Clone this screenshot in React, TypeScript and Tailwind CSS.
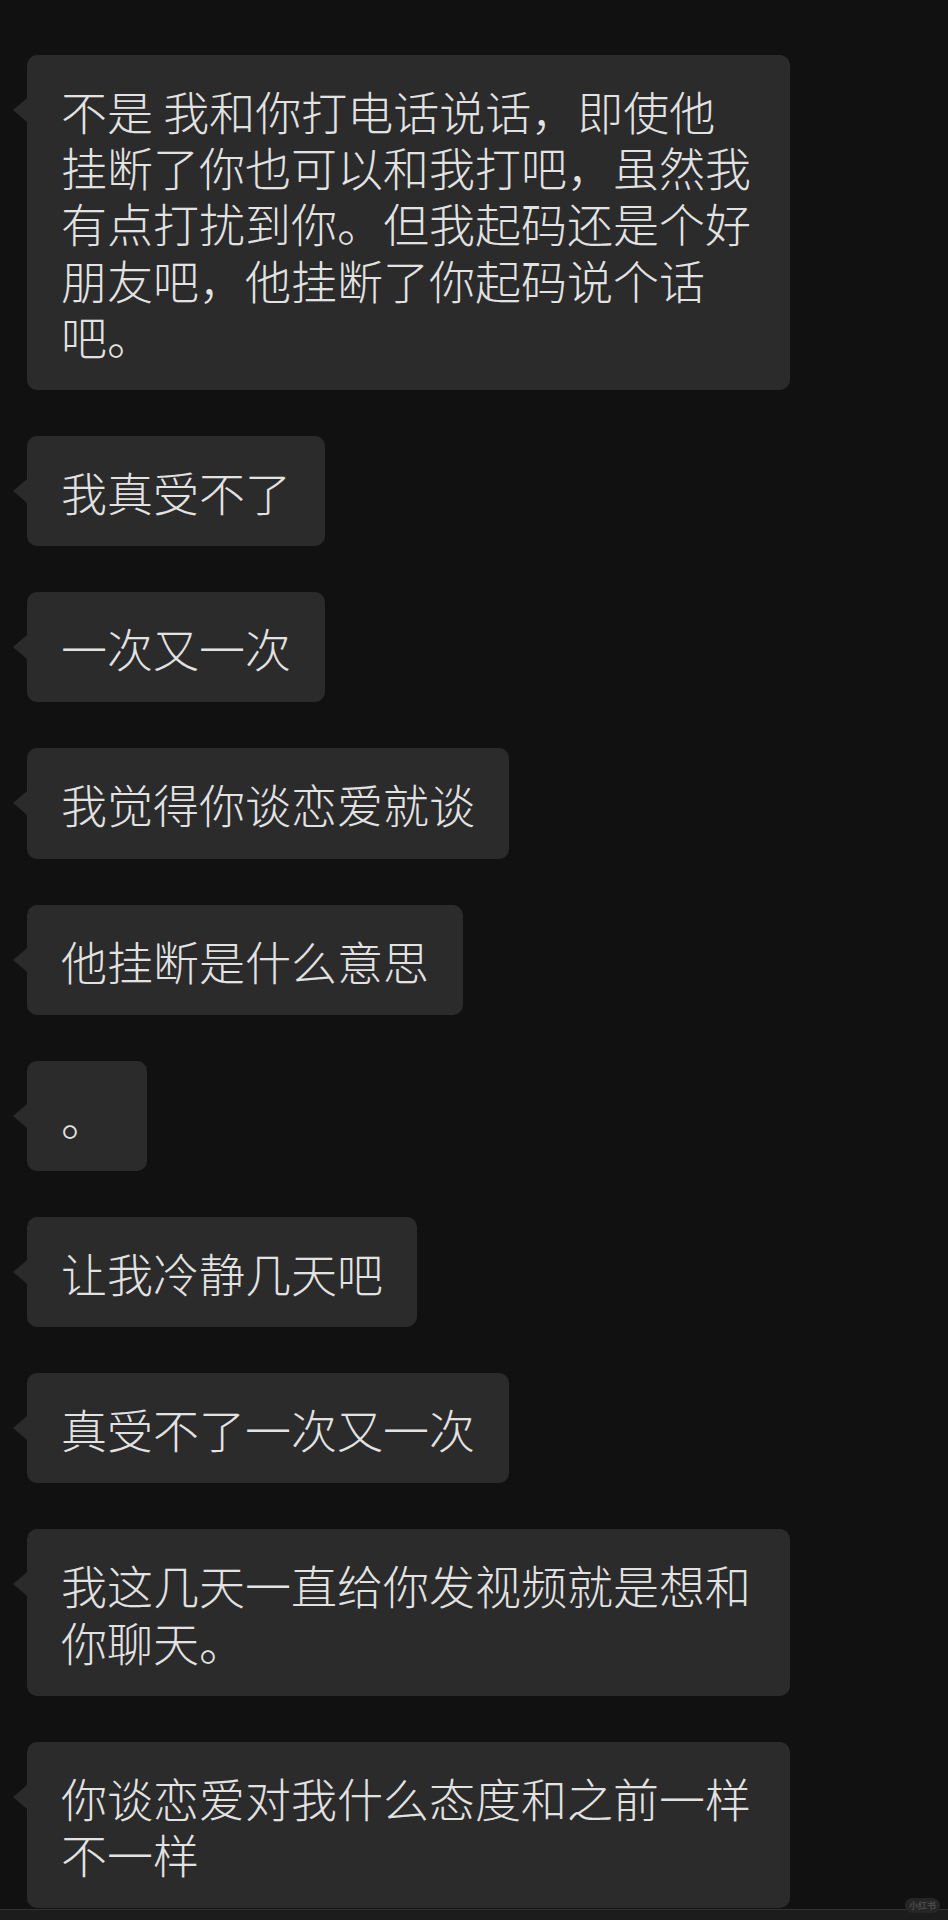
const messages = [
  "不是 我和你打电话说话，即使他挂断了你也可以和我打吧，虽然我有点打扰到你。但我起码还是个好朋友吧，他挂断了你起码说个话吧。",
  "我真受不了",
  "一次又一次",
  "我觉得你谈恋爱就谈",
  "他挂断是什么意思",
  "。",
  "让我冷静几天吧",
  "真受不了一次又一次",
  "我这几天一直给你发视频就是想和你聊天。",
  "你谈恋爱对我什么态度和之前一样不一样",
];

function Bubble({ text }: { text: string }) {
  return (
    <div className="relative self-start ml-[27px]">
      {/* tail, level with the first line */}
      <div className="absolute left-[-14px] top-[43px] w-0 h-0 border-y-[12px] border-y-transparent border-r-[14px] border-r-[#2b2b2b]" />
      <div className="max-w-[763px] min-w-[120px] rounded-[10px] bg-[#2b2b2b] px-[34px] py-[27px] text-[46px] leading-[56.2px] font-light text-[#e2e2e2]">
        {text}
      </div>
    </div>
  );
}

export default function App() {
  return (
    <div
      className="relative w-[948px] h-[1920px] overflow-hidden bg-[#111111] flex flex-col"
      style={{ fontFamily: '"Noto Sans CJK SC", "Noto Sans", sans-serif' }}
    >
      <div className="flex flex-col gap-[46px] pt-[55px]">
        {messages.map((m, i) => (
          <Bubble key={i} text={m} />
        ))}
      </div>

      {/* bottom strip */}
      <div className="absolute left-0 right-0 bottom-0 h-[11px] bg-[#1c1c1c] border-t border-[#333333]" />

      {/* watermark */}
      <div className="absolute right-[8px] bottom-[7px] h-[15px] px-[4px] rounded-full bg-[#262626] flex items-center text-[9px] leading-none text-[#4a4a4a] font-bold">
        小红书
      </div>
    </div>
  );
}
